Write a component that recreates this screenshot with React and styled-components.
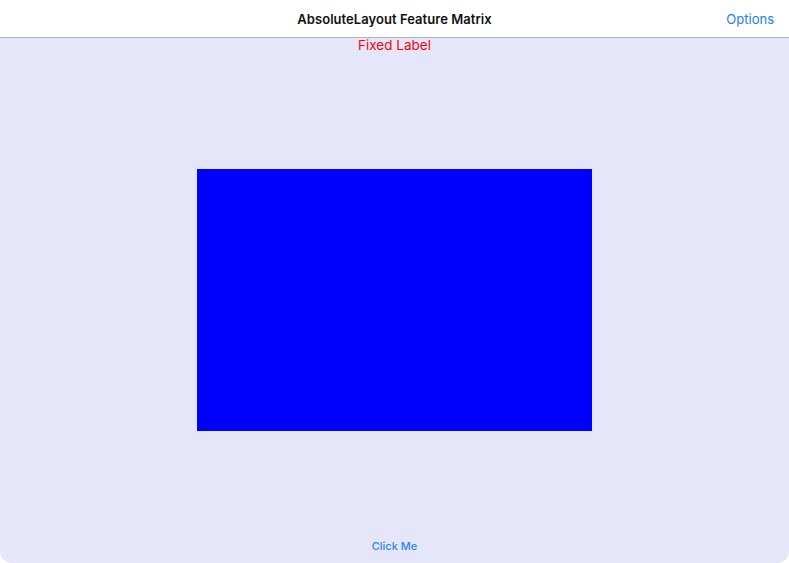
import React from 'react';
import styled, { createGlobalStyle } from 'styled-components';

const GlobalStyle = createGlobalStyle`
    html, body {
        margin: 0;
        padding: 0;
        background: #ffffff;
    }
    #root {
        width: 789px;
        height: 563px;
    }
`;

const Screen = styled.div`
    width: 789px;
    height: 563px;
    display: flex;
    flex-direction: column;
    font-family: Inter, "Liberation Sans", Arial, sans-serif;
    overflow: hidden;
`;

const NavBar = styled.div`
    height: 37px;
    flex: none;
    display: grid;
    grid-template-columns: 1fr auto 1fr;
    align-items: center;
    background: #ffffff;
    border-bottom: 1px solid #b2b2b6;
`;

const Title = styled.div`
    grid-column: 2;
    font-size: 13px;
    font-weight: 600;
    color: #111111;
    letter-spacing: 0.05px;
`;

const NavButton = styled.button`
    grid-column: 3;
    justify-self: end;
    margin-right: 15px;
    padding: 0;
    border: none;
    background: none;
    font-family: inherit;
    font-size: 13px;
    color: #1a7ef5;
`;

const Content = styled.div`
    flex: 1;
    display: flex;
    flex-direction: column;
    align-items: center;
    background: #e6e6fa;
    border-bottom-left-radius: 12px;
    border-bottom-right-radius: 12px;
`;

const FixedLabel = styled.div`
    margin-top: -1px;
    height: 17px;
    line-height: 17px;
    font-size: 13.5px;
    color: #ff0000;
`;

const Box = styled.div`
    margin-top: 115px;
    width: 395px;
    height: 262px;
    background: #0000ff;
`;

const LinkButton = styled.button`
    margin-top: auto;
    margin-bottom: 10px;
    padding: 0;
    border: none;
    background: none;
    font-family: inherit;
    font-size: 11px;
    font-weight: 500;
    color: #2c86f5;
`;

const App = () => (
    <>
        <GlobalStyle />
        <Screen>
            <NavBar>
                <Title>AbsoluteLayout Feature Matrix</Title>
                <NavButton>Options</NavButton>
            </NavBar>
            <Content>
                <FixedLabel>Fixed Label</FixedLabel>
                <Box />
                <LinkButton>Click Me</LinkButton>
            </Content>
        </Screen>
    </>
);

export default App;
